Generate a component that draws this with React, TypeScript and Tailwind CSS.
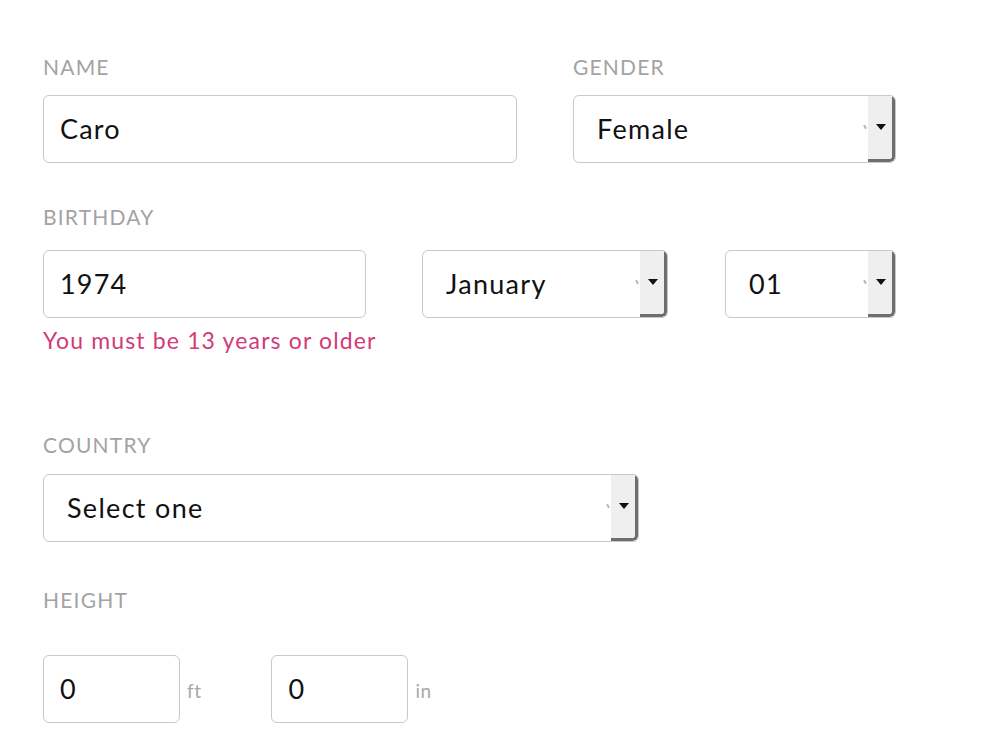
import React from "react";

const font = { fontFamily: "Lato, 'Noto Sans', sans-serif" };

function Label({ children, className = "" }: { children: React.ReactNode; className?: string }) {
  return (
    <div className={`text-[21px] leading-[24px] text-[#a3a3a3] uppercase tracking-[1.2px] ${className}`}>{children}</div>
  );
}

function TextBox({ value, width }: { value: string; width: string }) {
  return (
    <div
      className={`${width} h-[68px] flex items-center border border-[#c8c8c8] rounded-[6px] bg-white pl-[16px] text-[27px] tracking-[1.2px] text-[#111]`}
    >
      {value}
    </div>
  );
}

function SelectBox({ value, width }: { value: string; width: string }) {
  return (
    <div
      className={`${width} h-[68px] flex items-stretch border border-[#c8c8c8] rounded-[6px] bg-white overflow-hidden`}
    >
      <div className="flex-1 flex items-center pl-[23px] text-[27px] tracking-[1.3px] text-[#111]">{value}</div>
      <div className="flex items-center pr-[2px]">
        <div className="w-[2px] h-[4px] bg-[#b5b5b5] rotate-[-30deg] -mt-[4px]" />
      </div>
      <div className="w-[27px] bg-[#efefef] border-r-[3px] border-b-[3px] border-[#6e6e6e] rounded-br-[5px] flex items-center justify-center">
        <div className="w-0 h-0 border-l-[5px] border-r-[5px] border-t-[6px] border-l-transparent border-r-transparent border-t-[#111] ml-[1px] mb-[1px]" />
      </div>
    </div>
  );
}

export default function App() {
  return (
    <div className="w-[999px] h-[741px] bg-white overflow-hidden" style={font}>
      <div className="pl-[43px] pt-[55px] flex flex-col">
        {/* Row 1 */}
        <div className="flex gap-[56px]">
          <div className="flex flex-col">
            <Label className="mb-[16px]">Name</Label>
            <TextBox value="Caro" width="w-[474px]" />
          </div>
          <div className="flex flex-col">
            <Label className="mb-[16px]">Gender</Label>
            <SelectBox value="Female" width="w-[323px]" />
          </div>
        </div>

        {/* Birthday */}
        <Label className="mt-[42px] mb-[21px]">Birthday</Label>
        <div className="flex">
          <TextBox value="1974" width="w-[323px]" />
          <div className="ml-[56px]">
            <SelectBox value="January" width="w-[246px]" />
          </div>
          <div className="ml-[57px]">
            <SelectBox value="01" width="w-[171px]" />
          </div>
        </div>
        <div className="mt-[9px] text-[23px] leading-[26px] tracking-[1.15px] text-[#d23a78]">You must be 13 years or older</div>

        {/* Country */}
        <Label className="mt-[80px] mb-[17px]">Country</Label>
        <SelectBox value="Select one" width="w-[596px]" />

        {/* Height */}
        <Label className="mt-[46px] mb-[43px]">Height</Label>
        <div className="flex items-center">
          <TextBox value="0" width="w-[137px]" />
          <span className="ml-[7px] mt-[4px] text-[19px] tracking-[0.5px] text-[#a8a8a8]">ft</span>
          <div className="ml-[70px]">
            <TextBox value="0" width="w-[137px]" />
          </div>
          <span className="ml-[7px] mt-[4px] text-[19px] tracking-[0.5px] text-[#a8a8a8]">in</span>
        </div>
      </div>
    </div>
  );
}
